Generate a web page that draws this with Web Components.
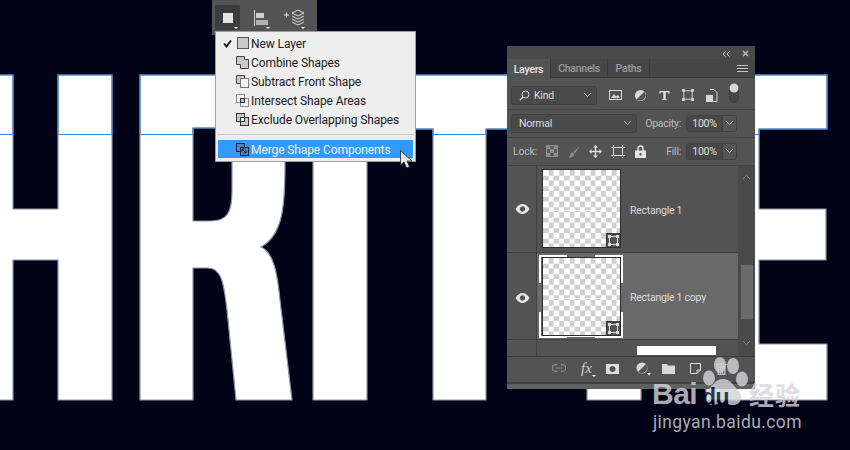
<!DOCTYPE html>
<html lang="en"><head><meta charset="utf-8"><title>Layers</title>
<style>
html,body{margin:0;padding:0;width:850px;height:450px;overflow:hidden;background:#020316}
body{font-family:Roboto,"Liberation Sans",sans-serif}
</style></head><body>
<ps-desktop>
  <ps-artwork></ps-artwork>
  <ps-toolbar></ps-toolbar>
  <ps-menu>
    <ps-menu-item checked icon="new">New Layer</ps-menu-item>
    <ps-menu-item icon="combine">Combine Shapes</ps-menu-item>
    <ps-menu-item icon="subtract">Subtract Front Shape</ps-menu-item>
    <ps-menu-item icon="intersect">Intersect Shape Areas</ps-menu-item>
    <ps-menu-item icon="exclude">Exclude Overlapping Shapes</ps-menu-item>
    <ps-menu-sep></ps-menu-sep>
    <ps-menu-item active icon="merge">Merge Shape Components</ps-menu-item>
  </ps-menu>
  <ps-layers>
    <ps-layer-row>Rectangle 1</ps-layer-row>
    <ps-layer-row selected>Rectangle 1 copy</ps-layer-row>
    <ps-layer-row partial></ps-layer-row>
  </ps-layers>
  <ps-cursor></ps-cursor>
  <ps-watermark></ps-watermark>
</ps-desktop>
<script>
function def(name, html, extra){
  const t=document.createElement('template');t.innerHTML=html;
  customElements.define(name,class extends HTMLElement{
    constructor(){super();this.attachShadow({mode:'open'}).appendChild(t.content.cloneNode(true));}
    connectedCallback(){if(extra)extra(this);}
  });
}
def('ps-desktop',`<style>:host{display:block;position:relative;width:850px;height:450px;overflow:hidden;background:#020316}</style><slot></slot>`);

def('ps-artwork',`<style>:host{position:absolute;inset:0;display:block}svg{display:block}</style>
<svg width="850" height="450" viewBox="0 0 850 450">
<defs>
<clipPath id="top"><rect x="-5" y="0" width="860" height="134.5"/></clipPath>
<g id="l">
<path fill-rule="evenodd" d="M-3 75H13V209H58V75H112V400H58V260H13V400H-3Z"/>
<path fill-rule="evenodd" d="M140 75H255C275 75 285 90 285 120V165C285 205 283 235 261 247C275 253 278 280 280 300L292 400H236L227 310C224 285 222 268 208 268H193V400H140ZM193 128H215C228 128 232 135 232 150V190C232 212 228 221 210 221H193Z"/>
<path d="M313 75H367V400H313Z"/>
<path d="M380 75H540V129H486V400H433V129H380Z"/>
<path d="M587 129H641V400H587Z"/>
<path d="M706 75H827V129H759V209H826V260H759V344H827V400H706Z"/>
</g>
</defs>
<use href="#l" fill="#fff" stroke="#8f93a8" stroke-width="1.2"/>
<g clip-path="url(#top)"><use href="#l" fill="none" stroke="#3b8ad6" stroke-width="1.2"/></g>
<path d="M0 134.5H13M58 134.5H112M140 134.5H193M433 134.5H486M755 134.5H759" stroke="#3b8ad6" stroke-width="1" fill="none"/>
</svg>`);

def('ps-toolbar',`<style>
:host{position:absolute;left:212px;top:0;width:105px;height:35px;background:#535353;display:flex;align-items:flex-start;padding:5px 0 0 3px;box-sizing:border-box;gap:0}
.b{width:25px;height:25px;position:relative;display:flex;align-items:center;justify-content:center}
.on{background:#3d3d3d;border-radius:2px}
svg{display:block}
</style>
<div class="b on"><svg width="25" height="25"><rect x="8" y="8" width="10" height="10" fill="#e4e4e4"/><path d="M19 22h4l-2 2z" fill="#fff"/></svg></div>
<div class="b" style="margin-left:10px"><svg width="25" height="25"><path d="M4.500 5V21" stroke="#d0d0d0" fill="none"/><rect x="6" y="8" width="8" height="5" fill="#d0d0d0"/><rect x="6" y="15" width="12" height="5" fill="#b4b4b4"/><path d="M16 22h4l-2 2z" fill="#fff"/></svg></div>
<div class="b" style="margin-left:3px;width:30px"><svg width="30" height="25"><path d="M6 10h5M8.500 7.500v5" stroke="#ddd" fill="none"/><path d="M20 5l6 3-6 3-6-3z" fill="none" stroke="#ddd"/><path d="M14 11l6 3 6-3M14 14l6 3 6-3M14 17l6 3 6-3" fill="none" stroke="#ddd"/><path d="M23 22h4l-2 2z" fill="#fff"/></svg></div>`);

def('ps-menu',`<style>
:host{position:absolute;left:215px;top:31px;width:201px;height:131px;box-sizing:border-box;background:#eee;border:1px solid #9f9f9f;padding:2px 2px 2px;display:flex;flex-direction:column;color:#1a1a1a;font:12px Roboto,"Liberation Sans",sans-serif;letter-spacing:-.1px}
</style><slot></slot>`);
def('ps-menu-sep',`<style>:host{display:block;height:1px;background:#c4c4c4;margin:5px -1px 5px}</style>`);
const ICONS={
 new:`<rect x="2.500" y="1.500" width="11" height="11" fill="#c9c9c9" stroke="#555"/>`,
 combine:`<path d="M1.500 1.500H9.500V4.500H13.500V13.500H5.500V9.500H1.500Z" fill="#c9c9c9" stroke="#444"/>`,
 subtract:`<path d="M1.500 1.500H9.500V4.500H5.500V9.500H1.500Z" fill="#c9c9c9" stroke="#444"/><rect x="5.500" y="4.500" width="8" height="9" fill="#f2f2f2" stroke="#777"/>`,
 intersect:`<rect x="1.500" y="1.500" width="8" height="8" fill="#f2f2f2" stroke="#8a8a8a"/><rect x="5.500" y="5.500" width="8" height="8" fill="#f2f2f2" stroke="#8a8a8a"/><rect x="5.500" y="5.500" width="4" height="4" fill="#c0c0c0" stroke="#333"/>`,
 exclude:`<rect x="1.500" y="1.500" width="8" height="8" fill="#c9c9c9" stroke="#333"/><rect x="5.500" y="5.500" width="8" height="8" fill="#c9c9c9" stroke="#333"/><rect x="5.500" y="5.500" width="4" height="4" fill="#f2f2f2" stroke="#333"/>`,
 merge:`<rect x="1.500" y="1.500" width="8" height="8" fill="#4f86c4" stroke="#10233f"/><rect x="5.500" y="5.500" width="8" height="8" fill="#4f86c4" stroke="#10233f"/><path d="M7 7l4 4M7 7h2.500M7 7v2.500M11 11H8.500M11 11V8.500" stroke="#10233f" fill="none"/>`
};
def('ps-menu-item',`<style>
:host{display:flex;align-items:center;height:19px;box-sizing:border-box;white-space:nowrap}
:host([active]){background:#3399ff;color:#eaf4ff;height:18px;padding-top:1px}
.c{width:17px;flex:none;display:flex;justify-content:center;padding-left:1px;box-sizing:border-box}
.i{width:15px;height:15px;flex:none;margin-right:1px;margin-top:-1px}
svg{display:block}
</style><span class="c"></span><svg class="i" width="15" height="15" viewBox="0 0 15 15"></svg><span><slot></slot></span>`,
 el=>{const s=el.shadowRoot;s.querySelector('.i').innerHTML=ICONS[el.getAttribute('icon')]||'';
  if(el.hasAttribute('checked'))s.querySelector('.c').innerHTML='<svg width="9" height="9" viewBox="0 0 9 9"><path d="M1 4.500L3.500 7.500L8 1.500" fill="none" stroke="#111" stroke-width="1.800"/></svg>';});

const chev=`<svg width="9" height="6" viewBox="0 0 9 6"><path d="M1 1l3.500 3.500L8 1" fill="none" stroke="#b8b8b8"/></svg>`;
def('ps-layers',`<style>
:host{position:absolute;left:507px;top:46px;width:248px;height:343px;background:#535353;display:flex;flex-direction:column;box-sizing:border-box;color:#d6d6d6;font:10.500px Roboto,"Liberation Sans",sans-serif;letter-spacing:-.25px;overflow:hidden}
svg{display:block;flex:none}
.hd{height:13px;background:#4a4a4a;display:flex;justify-content:flex-end;align-items:center;gap:12px;padding:2px 6px 0 0;box-sizing:border-box;flex:none}
.tabs{height:18px;background:#464646;display:flex;flex:none;padding:0 7px 0 0;border-bottom:1px solid #3a3a3a;box-sizing:content-box}
.tab{display:flex;align-items:center;justify-content:center;color:#9d9d9d;font-weight:500;border-right:1px solid #3a3a3a;padding-top:1px;box-sizing:border-box}
.tab.a{background:#535353;color:#e6e6e6;margin-bottom:-1px}
.sp{flex:1}
.row{display:flex;align-items:center;border-bottom:1px solid #444;flex:none;box-sizing:border-box}
.f{height:32px;padding:3px 0 0 4px}
.bl{height:28px;padding:0 0 1px 4px}
.lk{height:28px;padding:0 0 1px 6px}
.sel{background:#494949;border:1px solid #3f3f3f;border-radius:3px;height:19px;box-sizing:border-box;display:flex;align-items:center;color:#dcdcdc}
.kind{width:86px;padding:0 4px 0 7px}
.kind span{margin-left:4px;flex:1}
.norm{width:126px;padding:0 4px 0 7px}
.norm span{flex:1}
.fi{display:flex;align-items:center;margin-left:12px;gap:12px}
.lab{color:#bcbcbc;margin-left:auto}
.num{display:flex;height:17px;width:51px;border:1px solid #424242;border-radius:3px;box-sizing:border-box;margin:0 18px 0 5px;background:#555}
.num b{font-weight:400;width:35px;background:#474747;display:flex;align-items:center;justify-content:center;color:#e0e0e0;border-right:1px solid #424242}
.num i{flex:1;display:flex;align-items:center;justify-content:center}
.main{height:190px;display:flex;flex:none;border-bottom:1px solid #3c3c3c;box-sizing:content-box}
.list{width:231px;flex:none;overflow:hidden;display:flex;flex-direction:column}
.sb{flex:1;background:#4a4a4a;display:flex;flex-direction:column;align-items:center;padding-top:8px;box-sizing:border-box;position:relative}
.th{width:12px;background:#6a6a6a;margin-top:85px;height:54px}
.sb .d{margin-top:21px}
.foot{height:25px;display:flex;align-items:center;flex:none;border-bottom:2px solid #3f3f3f;box-sizing:content-box;padding-bottom:0}
.foot>*{position:relative;top:-1px}
.fx{font:italic 15px "Liberation Serif",serif;color:#d0d0d0;width:13px;margin-left:14px;flex:none;text-align:center;letter-spacing:0}
.fx:after{content:"";position:absolute;right:-3px;bottom:0;border:2px solid transparent;border-top-color:#fff;border-bottom:0}
.st{flex:1;background:#606060;position:relative}
</style>
<div class="hd"><svg width="8" height="6" viewBox="0 0 8 6"><path d="M3.500 0.500L1 3l2.500 2.500M7.500 0.500L5 3l2.500 2.500" fill="none" stroke="#ccc"/></svg><svg width="7" height="7" viewBox="0 0 7 7"><path d="M1 1l5 5M6 1L1 6" stroke="#bbb" stroke-width="1.600"/></svg></div>
<div class="tabs">
  <div class="tab a" style="width:44px">Layers</div><div class="tab" style="width:57px">Channels</div><div class="tab" style="width:42px">Paths</div><div class="sp"></div>
  <svg style="align-self:center" width="11" height="7" viewBox="0 0 11 7"><path d="M0 .500h11M0 3.500h11M0 6.500h11" stroke="#c4c4c4"/></svg>
</div>
<div class="row f">
  <div class="sel kind"><svg width="11" height="11" viewBox="0 0 11 11"><circle cx="6.500" cy="4.500" r="3.500" fill="none" stroke="#ddd"/><path d="M4 7L1 10" stroke="#ddd" stroke-width="1.500"/></svg><span>Kind</span>${chev}</div>
  <div class="fi">
   <svg width="13" height="12" viewBox="0 0 13 12"><rect x=".5" y="1.500" width="12" height="9" fill="none" stroke="#d8d8d8"/><path d="M2 9l3-4 2 2.500 2-1.500 2 3z" fill="#d8d8d8"/></svg>
   <svg width="13" height="13" viewBox="0 0 13 13"><circle cx="6.500" cy="6.500" r="5.500" fill="#d8d8d8"/><path d="M10.300 2.700A5.400 5.400 0 0 1 2.700 10.300Z" fill="#535353"/></svg>
   <svg width="11" height="11" viewBox="0 0 12 11"><path d="M0.500 0.500H11.500V3.500H10.500L10 2H7.300V9.500H8.800V10.500H3.200V9.500H4.700V2H2L1.500 3.500H.5Z" fill="#e0e0e0"/></svg>
   <svg width="12" height="12" viewBox="0 0 13 13"><rect x="2" y="2" width="9" height="9" fill="none" stroke="#d8d8d8"/><path d="M0 0h3v3H0zM10 0h3v3h-3zM0 10h3v3H0zM10 10h3v3h-3z" fill="#d8d8d8"/></svg>
   <svg width="12" height="13" viewBox="0 0 12 13"><path d="M4 .5H8L11 3.500V12.500H5" fill="none" stroke="#d8d8d8"/><rect x="0" y="6" width="7" height="7" fill="#d8d8d8"/></svg>
   <svg width="10" height="20" viewBox="0 0 10 20" style="margin-left:-1px;margin-top:-4px"><rect x=".5" y=".5" width="9" height="19" rx="4.500" fill="#464646" stroke="#404040"/><circle cx="5" cy="5" r="4.500" fill="#d8d8d8"/></svg>
  </div>
</div>
<div class="row bl">
  <div class="sel norm"><span>Normal</span>${chev}</div>
  <span class="lab">Opacity:</span>
  <div class="num"><b>100%</b><i>${chev}</i></div>
</div>
<div class="row lk">
  <span style="color:#bcbcbc;width:33px;flex:none">Lock:</span>
  <svg width="12" height="12" viewBox="0 0 12 12"><rect width="12" height="12" fill="#5c5c5c"/><path d="M0 0h4v4H0zM8 0h4v4H8zM4 4h4v4H4zM0 8h4v4H0zM8 8h4v4H8z" fill="#8e8e8e"/><rect x=".5" y=".5" width="11" height="11" fill="none" stroke="#8e8e8e"/></svg>
  <svg width="13" height="13" viewBox="0 0 13 13" style="margin-left:10px"><path d="M12.500 0.500L5 7l1.500 1.500zM4.500 7.500C2 8 2.500 11 0.500 12.500 3 12.500 6 12 6 9z" fill="#8f8f8f"/></svg>
  <svg width="13" height="13" viewBox="0 0 13 13" style="margin-left:8px"><path d="M6.500 0L9 2.500H7.300V5.700H10.500V4L13 6.500 10.500 9V7.300H7.300V10.500H9L6.500 13 4 10.500H5.700V7.300H2.500V9L0 6.500 2.500 4V5.700H5.700V2.500H4Z" fill="#dcdcdc"/></svg>
  <svg width="14" height="13" viewBox="0 0 14 13" style="margin-left:9px"><path d="M2.500 2.500H11.500V10.500H2.500Z" fill="none" stroke="#dcdcdc"/><path d="M0 2.500H14M2.500 0V13M0 10.500H14M11.500 0V13" stroke="#dcdcdc" stroke-dasharray="2 1" fill="none" opacity=".8"/></svg>
  <svg width="11" height="13" viewBox="0 0 11 13" style="margin-left:10px"><path d="M3 6V3.500a2.500 2.500 0 0 1 5 0V6" fill="none" stroke="#e4e4e4" stroke-width="1.500"/><rect y="5.500" width="11" height="7.500" fill="#e4e4e4"/><rect x="4.500" y="8" width="2" height="2.500" fill="#535353"/></svg>
  <span class="lab">Fill:</span>
  <div class="num"><b>100%</b><i>${chev}</i></div>
</div>
<div class="main">
  <div class="list"><slot></slot></div>
  <div class="sb">
    <svg width="9" height="6" viewBox="0 0 9 6"><path d="M1 5l3.500-3.500L8 5" fill="none" stroke="#7d7d7d"/></svg>
    <div class="th"></div>
    <svg class="d" width="9" height="6" viewBox="0 0 9 6"><path d="M1 1l3.500 3.500L8 1" fill="none" stroke="#7d7d7d"/></svg>
  </div>
</div>
<div class="foot">
  <svg width="14" height="9" viewBox="0 0 14 9" style="margin-left:45px"><path d="M5 .7H3.500a3.300 3.300 0 0 0 0 6.600H5M9 .7h1.500a3.300 3.300 0 0 1 0 6.600H9M4 4h6" fill="none" stroke="#8f8f8f" stroke-width="1.200"/></svg>
  <span class="fx">fx</span>
  <svg width="13" height="10" viewBox="0 0 13 10" style="margin-left:13px"><path fill-rule="evenodd" d="M0 0H13V10H0ZM6.500 2a3 3 0 1 0 .01 0Z" fill="#dedede"/></svg>
  <svg width="16" height="14" viewBox="0 0 16 14" style="margin-left:17px"><circle cx="6" cy="6" r="5.500" fill="#d8d8d8"/><path d="M9.800 2.200A5.400 5.400 0 0 1 2.200 9.800Z" fill="#535353"/><path d="M11 11h4l-2 2.500z" fill="#fff"/></svg>
  <svg width="13" height="10" viewBox="0 0 13 10" style="margin-left:10px"><path d="M0 0H5L6 1.500H13V10H0Z" fill="#d8d8d8"/></svg>
  <svg width="11" height="11" viewBox="0 0 11 11" style="margin-left:15px"><path d="M.5.500H10.500V7L7 10.500H.5Z" fill="none" stroke="#dedede"/><path d="M10.500 7H7V10.500" fill="none" stroke="#dedede"/></svg>
  <svg width="11" height="12" viewBox="0 0 11 12" style="margin-left:15px"><path d="M0 1.500H11M3.500 1.500V.5H7.500V1.500" fill="none" stroke="#bdbdbd"/><path d="M1.500 3H9.500V12H1.500Z" fill="#bdbdbd"/><path d="M3.500 4.500V10.500M5.500 4.500V10.500M7.500 4.500V10.500" stroke="#535353"/></svg>
</div>
<div class="st"></div>`);

def('ps-layer-row',`<style>
:host{display:flex;height:87px;flex:none;box-sizing:border-box;border-bottom:1px solid #3f3f3f;color:#dcdcdc}
:host([partial]){height:16px;border-bottom:0}
.e{width:30px;flex:none;border-right:1px solid #404040;display:flex;align-items:center;justify-content:center;box-sizing:border-box;padding-left:1px}
:host([selected]) .e{padding-top:3px}
.c{flex:1;display:flex;align-items:center;position:relative;padding:0 0 2px 5px;background:#535353}
:host([selected]) .c{background:#696969;padding-bottom:0}
.t{width:79px;height:79px;box-sizing:border-box;border:1px solid #2c2c2c;position:relative;flex:none;background:conic-gradient(#cfcfcf 25%,#fff 0 50%,#cfcfcf 0 75%,#fff 0) 0 0/10.500px 10.500px}
.d{position:absolute;left:11px;right:14px;top:40px;height:1px;background:repeating-linear-gradient(90deg,#fff 0 3px,transparent 3px 4px)}
.b{position:absolute;right:0;bottom:0;width:14px;height:14px;background:#535353;border:1px solid #333;border-width:1px 0 0 1px;box-sizing:border-box;display:flex;align-items:center;justify-content:center}
.n{margin-left:9px;position:relative;top:2px}
:host([selected]) .n{top:1px}
.fr{position:absolute;left:2px;top:2px;width:84px;height:83px;border:2px solid #fff;box-sizing:border-box;display:none}
.g1,.g2{display:none;position:absolute;background:#696969;height:2px;left:30px;width:28px}
.g1{top:2px}.g2{bottom:0}
.g3,.g4{display:none;position:absolute;background:#696969;width:2px;top:30px;height:29px}
.g3{left:2px}.g4{left:84px}
:host([selected]) .fr,:host([selected]) .g1,:host([selected]) .g2,:host([selected]) .g3,:host([selected]) .g4{display:block}
.w{display:none;position:absolute;left:100px;top:6px;width:79px;height:9px;background:#fff}
:host([partial]) .w{display:block}
:host([partial]) .t,:host([partial]) .e svg{display:none}
svg{display:block}
</style>
<div class="e"><svg width="15" height="10" viewBox="0 0 15 10"><path fill-rule="evenodd" d="M.5 5C2.500 1.500 5 0 7.500 0S12.500 1.500 14.500 5C12.500 8.500 10 10 7.500 10S2.500 8.500 .5 5ZM7.500 2.300a2.700 2.700 0 1 0 .01 0Z" fill="#e6e6e6"/></svg></div>
<div class="c"><div class="fr"></div><i class="g1"></i><i class="g2"></i><i class="g3"></i><i class="g4"></i>
<div class="t"><div class="d"></div><div class="b"><svg width="11" height="11" viewBox="0 0 11 11"><rect x="1.500" y="1.500" width="8" height="8" fill="none" stroke="#ddd"/><path d="M0 0h3v3H0zM8 0h3v3H8zM0 8h3v3H0zM8 8h3v3H8z" fill="#ddd"/></svg></div></div>
<span class="n"><slot></slot></span><div class="w"></div></div>`);

def('ps-cursor',`<style>:host{position:absolute;left:400px;top:150px;width:14px;height:20px;display:block}svg{display:block}</style>
<svg width="14" height="20" viewBox="0 0 14 20"><path d="M.5.5V15L4 12l2.500 6 3-1.300L7 11h5Z" fill="#e8e8e8" stroke="#222" stroke-width=".8"/></svg>`);

def('ps-watermark',`<style>
:host{position:absolute;left:651px;top:355px;width:160px;height:80px;display:block;color:#d4d4da;opacity:.8}
svg{position:absolute;left:48px;top:0}
.bai{position:absolute;left:1px;top:23px;font:700 30px/32px "Liberation Sans",Arial,sans-serif;letter-spacing:-.5px}
.du{position:absolute;left:51px;top:30px;font:700 23px/24px "Liberation Sans",Arial,sans-serif;color:#020316;letter-spacing:-.5px}
.cn{position:absolute;left:98px;top:25px;font:700 25px/28px "Noto Sans CJK SC",sans-serif;letter-spacing:1px;white-space:nowrap}
.url{position:absolute;left:2px;top:55px;font:17.500px/24px Roboto,"Liberation Sans",sans-serif;letter-spacing:.4px;white-space:nowrap}
</style>
<svg width="50" height="54" viewBox="0 0 50 54"><ellipse cx="21" cy="10" rx="6" ry="8" fill="#d4d4da"/><ellipse cx="34" cy="11" rx="6" ry="8" fill="#d4d4da"/><ellipse cx="10" cy="23" rx="6" ry="7.500" fill="#d4d4da"/><ellipse cx="43" cy="24" rx="6" ry="7.500" fill="#d4d4da"/><path d="M24 24C31 24 34 30 38 34C44 39 44 50 34 50C29 50 27 48 24 48C20 48 18 50 13 50C4 50 4 39 10 34C14 30 17 24 24 24Z" fill="#d4d4da"/></svg>
<span class="bai">Bai</span><span class="du">du</span><span class="cn">经验</span><span class="url">jingyan.baidu.com</span>`);
</script>
</body></html>
